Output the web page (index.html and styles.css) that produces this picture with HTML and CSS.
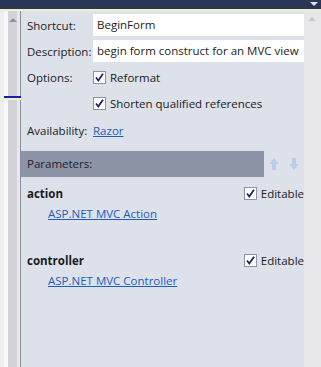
FILE: index.html
```html
<!DOCTYPE html>
<html>
<head>
<meta charset="utf-8">
<link rel="stylesheet" href="styles.css">
</head>
<body>
<div class="topbar"><span class="menu-arrow"></span></div>
<div class="topline"></div>
<div class="main">
  <div class="gutter">
    <div class="g-edge"></div>
    <div class="g-track"><span class="g-arrow"></span></div>
    <div class="g-light"></div>
    <div class="g-line"></div>
    <div class="caret-mark"></div>
  </div>
  <div class="panel">
    <div class="form">
      <div class="row">
        <span class="label">Shortcut:</span>
        <div class="input">BeginForm</div>
      </div>
      <div class="row">
        <span class="label">Description:</span>
        <div class="input">begin form construct for an MVC view</div>
      </div>
      <div class="row opt">
        <span class="label">Options:</span>
        <label class="check"><span class="box"><svg viewBox="0 0 13 13" width="13" height="13"><path d="M3 6.5 L5.3 9.5 L10 2.8" fill="none" stroke="#23235e" stroke-width="1.8"/></svg></span>Reformat</label>
      </div>
      <div class="row opt">
        <span class="label"></span>
        <label class="check"><span class="box"><svg viewBox="0 0 13 13" width="13" height="13"><path d="M3 6.5 L5.3 9.5 L10 2.8" fill="none" stroke="#23235e" stroke-width="1.8"/></svg></span>Shorten qualified references</label>
      </div>
      <div class="row avail">
        <span class="label">Availability:</span>
        <a class="link" href="#">Razor</a>
      </div>
    </div>
    <div class="params-head">
      <div class="params-title">Parameters:</div>
      <div class="params-tools">
        <svg class="tool" viewBox="0 0 14 16" width="14" height="16"><path d="M7 2 L12 8 L9 8 L9 14 L5 14 L5 8 L2 8 Z" fill="#b3cce6"/></svg>
        <svg class="tool" viewBox="0 0 14 16" width="14" height="16"><path d="M7 14 L12 8 L9 8 L9 2 L5 2 L5 8 L2 8 Z" fill="#b3cce6"/></svg>
      </div>
    </div>
    <div class="param">
      <div class="param-top">
        <span class="pname">action</span>
        <label class="check"><span class="box"><svg viewBox="0 0 13 13" width="13" height="13"><path d="M3 6.5 L5.3 9.5 L10 2.8" fill="none" stroke="#23235e" stroke-width="1.8"/></svg></span>Editable</label>
      </div>
      <a class="link plink" href="#">ASP.NET MVC Action</a>
    </div>
    <div class="param">
      <div class="param-top">
        <span class="pname">controller</span>
        <label class="check"><span class="box"><svg viewBox="0 0 13 13" width="13" height="13"><path d="M3 6.5 L5.3 9.5 L10 2.8" fill="none" stroke="#23235e" stroke-width="1.8"/></svg></span>Editable</label>
      </div>
      <a class="link plink" href="#">ASP.NET MVC Controller</a>
    </div>
  </div>
  <div class="rstrip"><span class="r-arrow"></span></div>
</div>
</body>
</html>
```
FILE: styles.css
```css
html, body {
  margin: 0;
  padding: 0;
}
body {
  width: 321px;
  height: 367px;
  overflow: hidden;
  font-family: "Open Sans", "Noto Sans", sans-serif;
  font-size: 11.5px;
  color: #1b1b1b;
  background: #dde1ea;
}
.topbar {
  height: 9px;
  background: #293655;
  position: relative;
}
.menu-arrow {
  position: absolute;
  right: 3px;
  top: 2px;
  width: 0;
  height: 0;
  border-left: 4px solid transparent;
  border-right: 4px solid transparent;
  border-top: 4px solid #dfe4ee;
}
.topline {
  height: 2px;
  background: #eef0c8;
}
.main {
  display: flex;
  height: 356px;
}
.gutter {
  width: 21px;
  display: flex;
  position: relative;
  background: #f3f3f5;
}
.g-edge {
  width: 8px;
  background: linear-gradient(to right, #eeeef0 0 4px, #f8f8fa 4px);
}
.g-track {
  width: 9px;
  background: #d2d2d8;
  position: relative;
}
.g-arrow {
  position: absolute;
  left: 1px;
  top: 7px;
  width: 0;
  height: 0;
  border-left: 4px solid transparent;
  border-right: 4px solid transparent;
  border-bottom: 4px solid #8e909a;
}
.g-light {
  width: 3px;
  background: #e8e8ec;
}
.g-line {
  width: 1px;
  background: #8b8f9a;
}
.caret-mark {
  position: absolute;
  left: 4px;
  top: 85px;
  width: 17px;
  height: 2px;
  background: #1d1da6;
  box-shadow: 0 2px 0 #eef0c8;
}
.panel {
  flex: 1;
  background: #dde1ea;
  display: flex;
  flex-direction: column;
}
.form {
  padding: 3px 0 0 6px;
  display: flex;
  flex-direction: column;
}
.row {
  display: flex;
  align-items: center;
  height: 22px;
  margin-bottom: 4px;
}
.label {
  width: 66px;
  flex: none;
}
.input {
  flex: 1;
  height: 22px;
  background: #ffffff;
  line-height: 22px;
  padding-left: 4px;
  white-space: nowrap;
  overflow: hidden;
}
.row.avail {
  margin-top: 1px;
}
.check {
  display: flex;
  align-items: center;
  gap: 4px;
}
.box {
  width: 11px;
  height: 11px;
  background: #ffffff;
  border: 1px solid #8d93a2;
  display: flex;
  align-items: center;
  justify-content: center;
  overflow: hidden;
}
.box svg {
  flex: none;
}
.link {
  color: #1f5dbb;
  text-decoration: underline;
}
.params-head {
  margin-top: 6px;
  display: flex;
  height: 26px;
}
.params-title {
  width: 237px;
  background: #8b93a5;
  padding-left: 6px;
  line-height: 26px;
  color: #20242e;
}
.params-tools {
  flex: 1;
  display: flex;
  align-items: center;
  justify-content: center;
  gap: 6px;
}
.tool {
  opacity: 0.9;
}
.param {
  padding: 8px 0 0 6px;
  height: 59px;
}
.param-top {
  display: flex;
  justify-content: space-between;
  align-items: center;
  height: 16px;
}
.pname {
  font-weight: bold;
}
.plink {
  display: inline-block;
  margin: 5px 0 0 21px;
}
.rstrip {
  width: 17px;
  background: #e7e7eb;
  position: relative;
}
.r-arrow {
  position: absolute;
  left: 4px;
  top: 6px;
  width: 0;
  height: 0;
  border-left: 4px solid transparent;
  border-right: 4px solid transparent;
  border-bottom: 4px solid #c4c6cc;
}
```
